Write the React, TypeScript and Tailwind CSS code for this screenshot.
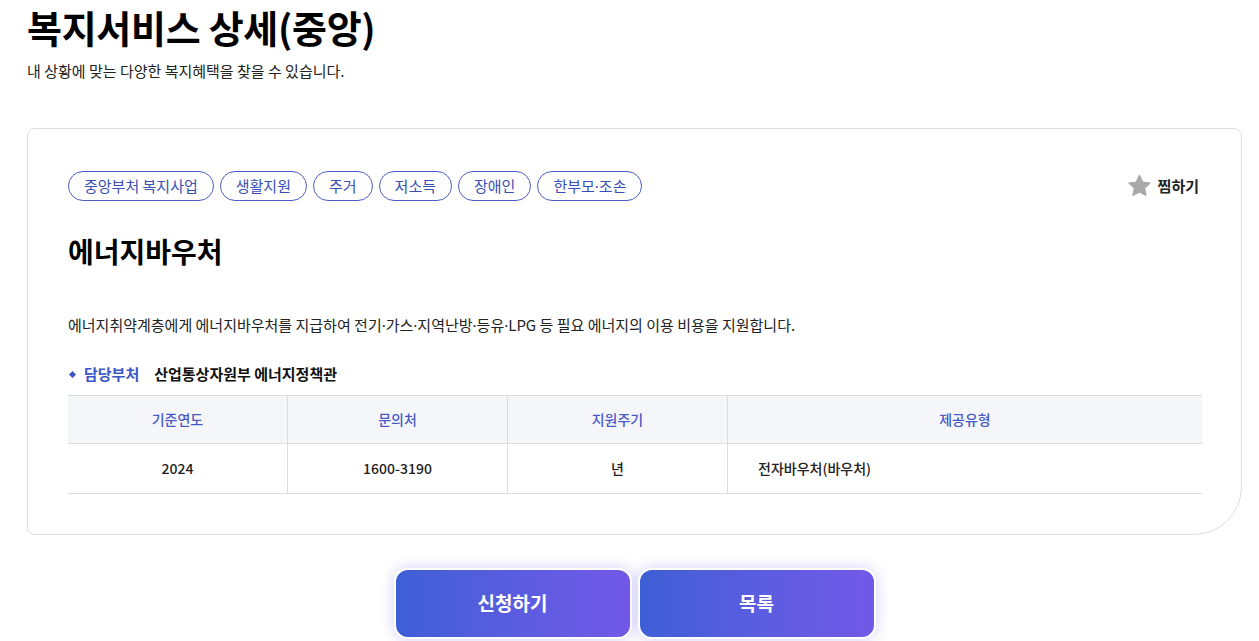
import React from "react";

const tags = ["중앙부처 복지사업", "생활지원", "주거", "저소득", "장애인", "한부모·조손"];

function Dotted({ text }: { text: string }) {
  const parts = text.split("·");
  return (
    <>
      {parts.map((p, i) => (
        <React.Fragment key={i}>
          {i > 0 && <span style={{ fontFamily: '"Noto Sans", sans-serif' }}>·</span>}
          {p}
        </React.Fragment>
      ))}
    </>
  );
}

function StarIcon() {
  return (
    <svg width="27" height="26" viewBox="0 0 24 24" aria-hidden="true">
      <path
        d="M12 2.2l2.95 6.2 6.75.85-4.95 4.7 1.25 6.7L12 17.4l-6 3.25 1.25-6.7L2.3 9.25l6.75-.85z"
        fill="#a9a9a9"
        stroke="#a9a9a9"
        strokeWidth="1.2"
        strokeLinejoin="round"
      />
    </svg>
  );
}

export default function App() {
  return (
    <div
      className="w-[1259px] h-[641px] overflow-hidden bg-white text-[#111]"
      style={{ fontFamily: '"Noto Sans CJK KR", "Noto Sans", sans-serif' }}
    >
      <div className="w-[1215px] ml-[27px] pt-[2px]">
        <h1 className="leading-[50px] text-[38px] font-bold tracking-[-0.3px] text-black whitespace-nowrap">
          복지서비스 상세(중앙)
        </h1>
        <p className="mt-[8px] text-[15px] leading-[22px] text-[#222]">
          내 상황에 맞는 다양한 복지혜택을 찾을 수 있습니다.
        </p>

        <div className="mt-[46px] border border-[#dfdfdf] rounded-[8px] rounded-br-[48px] pt-[42px] pl-[40px] pr-[39px] pb-[40px]">
          <div className="flex items-center justify-between">
            <div className="flex gap-[6px]">
              {tags.map((t) => (
                <span
                  key={t}
                  className="h-[30px] px-[15px] flex items-center rounded-full border border-[#4c5cc4] text-[15px] text-[#3a4fb5]"
                >
                  <Dotted text={t} />
                </span>
              ))}
            </div>
            <div className="flex items-center gap-[5px] pr-[3px]">
              <StarIcon />
              <span className="text-[15px] font-bold text-[#222]">찜하기</span>
            </div>
          </div>

          <h2 className="mt-[32px] text-[28px] leading-[36px] font-bold text-black">에너지바우처</h2>

          <p className="mt-[45px] text-[15px] leading-[22px] text-[#222]">
            <Dotted text="에너지취약계층에게 에너지바우처를 지급하여 전기·가스·지역난방·등유·LPG 등 필요 에너지의 이용 비용을 지원합니다." />
          </p>

          <div className="mt-[27px] flex items-center text-[15px] leading-[22px]">
            <span className="ml-[2px] w-[5px] h-[5px] bg-[#3a55c8] rotate-45" />
            <span className="ml-[9px] font-bold text-[#3a55c8]">담당부처</span>
            <span className="ml-[15px] font-bold text-[#111]">산업통상자원부 에너지정책관</span>
          </div>

          <div className="mt-[10px] border-t border-b border-[#dcdcdc] text-[14px]">
            <div className="grid grid-cols-[219px_220px_220px_1fr] bg-[#f5f6fa] border-b border-[#dcdcdc] h-[48px]">
              <div className="flex items-center justify-center font-medium text-[#4a5ac4]">기준연도</div>
              <div className="flex items-center justify-center font-medium text-[#4a5ac4] border-l border-[#dcdcdc]">문의처</div>
              <div className="flex items-center justify-center font-medium text-[#4a5ac4] border-l border-[#dcdcdc]">지원주기</div>
              <div className="flex items-center justify-center font-medium text-[#4a5ac4] border-l border-[#dcdcdc]">제공유형</div>
            </div>
            <div className="grid grid-cols-[219px_220px_220px_1fr] h-[49px]">
              <div className="flex items-center justify-center font-medium text-[#222]">2024</div>
              <div className="flex items-center justify-center font-medium text-[#222] border-l border-[#dcdcdc]">1600-3190</div>
              <div className="flex items-center justify-center font-medium text-[#222] border-l border-[#dcdcdc]">년</div>
              <div className="flex items-center pl-[30px] font-medium text-[#222] border-l border-[#dcdcdc]">전자바우처(바우처)</div>
            </div>
          </div>
        </div>

        <div className="mt-[33px] flex justify-center gap-[6px]">
          <button className="w-[238px] h-[71px] rounded-[14px] border-2 border-white bg-gradient-to-r from-[#3d5fd6] to-[#7259e8] shadow-[0_0_14px_rgba(100,90,220,0.3)] text-white text-[19px] font-bold">
            신청하기
          </button>
          <button className="w-[238px] h-[71px] rounded-[14px] border-2 border-white bg-gradient-to-r from-[#3d5fd6] to-[#7259e8] shadow-[0_0_14px_rgba(100,90,220,0.3)] text-white text-[19px] font-bold">
            목록
          </button>
        </div>
      </div>
    </div>
  );
}
